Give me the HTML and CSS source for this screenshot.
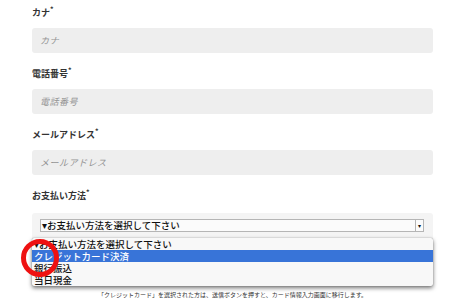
FILE: index.html
```html
<!DOCTYPE html>
<html lang="ja">
<head>
<meta charset="utf-8">
<link rel="stylesheet" href="styles.css">
</head>
<body>
<form class="form">
  <div class="field">
    <label class="label">カナ<span class="req">*</span></label>
    <div class="input">カナ</div>
  </div>
  <div class="field">
    <label class="label">電話番号<span class="req">*</span></label>
    <div class="input">電話番号</div>
  </div>
  <div class="field">
    <label class="label">メールアドレス<span class="req">*</span></label>
    <div class="input">メールアドレス</div>
  </div>
  <div class="field pay">
    <label class="label">お支払い方法<span class="req">*</span></label>
    <div class="select-wrap">
      <div class="select">
        <span class="select-text">▾お支払い方法を選択して下さい</span>
        <span class="select-btn">▾</span>
      </div>
      <ul class="menu">
        <li class="opt">▾お支払い方法を選択して下さい</li>
        <li class="opt active">クレジットカード決済</li>
        <li class="opt">銀行振込</li>
        <li class="opt">当日現金</li>
      </ul>
      <div class="circle"></div>
    </div>
    <p class="note">「クレジットカード」を選択された方は、送信ボタンを押すと、カード情報入力画面に移行します。</p>
  </div>
</form>
</body>
</html>
```
FILE: styles.css
```css
html, body {
  margin: 0;
  padding: 0;
  background: #ffffff;
}
body {
  font-family: "Noto Sans CJK JP", "Noto Sans", sans-serif;
  color: #222;
  overflow: hidden;
  width: 450px;
  height: 300px;
}
.form {
  display: flex;
  flex-direction: column;
  gap: 14px;
  padding: 6px 17px 0 32px;
  width: 401px;
}
.field {
  display: flex;
  flex-direction: column;
}
.label {
  display: block;
  height: 13px;
  overflow: visible;
  font-size: 9px;
  line-height: 13px;
  font-weight: bold;
  color: #333;
  margin-bottom: 9px;
}
.req {
  font-size: 7px;
  line-height: 0;
  vertical-align: top;
  position: relative;
  top: 3px;
}
.input {
  height: 25px;
  background: #eeeeee;
  border-radius: 3px;
  box-sizing: border-box;
  padding-left: 8px;
  font-size: 9px;
  line-height: 25px;
  font-style: italic;
  color: #949494;
  letter-spacing: 0.5px;
}
.pay .label {
  margin-bottom: 11px;
}
.select-wrap {
  position: relative;
  background: #f4f4f4;
  border-radius: 3px;
  padding: 6px 9px 14px 8px;
}
.select {
  display: flex;
  height: 13px;
  box-sizing: border-box;
  border: 1px solid #b5b5b5;
  background: #fbfbfb;
}
.select-text {
  flex: 1;
  font-size: 9.5px;
  line-height: 11px;
  padding-left: 1px;
  color: #111;
  font-weight: 500;
}
.select-btn {
  width: 7px;
  border-left: 1px solid #b5b5b5;
  font-size: 6px;
  line-height: 11px;
  text-align: center;
  color: #111;
}
.menu {
  position: absolute;
  left: 0;
  top: 25px;
  width: 401px;
  margin: 0;
  padding: 0;
  list-style: none;
  background: #f8f8f8;
  border-radius: 2px;
  box-shadow: 0 2px 4px rgba(0, 0, 0, 0.55), 0 0 1px rgba(0, 0, 0, 0.4);
}
.opt {
  height: 12px;
  font-size: 9.5px;
  line-height: 12px;
  padding-left: 2px;
  color: #111;
  font-weight: 500;
}
.opt.active {
  background: #3874d8;
  color: #fff;
}
.circle {
  position: absolute;
  left: -11px;
  top: 26px;
  width: 38px;
  height: 38px;
  box-sizing: border-box;
  border: 5px solid #ee1111;
  border-radius: 50%;
}
.note {
  margin: 45px 0 0;
  font-size: 6px;
  line-height: 8px;
  text-align: center;
  color: #333;
}
```
